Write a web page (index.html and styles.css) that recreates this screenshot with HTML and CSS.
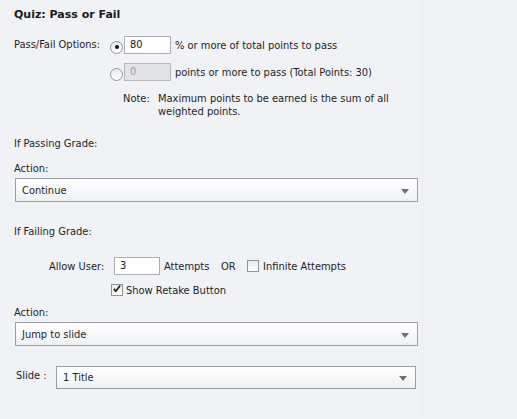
FILE: index.html
```html
<!DOCTYPE html>
<html>
<head>
<meta charset="utf-8">
<link rel="stylesheet" href="styles.css">
</head>
<body>
<div class="panel">
  <div class="title">Quiz: Pass or Fail</div>

  <div class="opt-row first">
    <span class="opt-label">Pass/Fail Options:</span>
    <span class="radio checked"></span>
    <span class="input">80</span>
    <span class="opt-text">% or more of total points to pass</span>
  </div>
  <div class="opt-row second">
    <span class="opt-label"></span>
    <span class="radio"></span>
    <span class="input disabled">0</span>
    <span class="opt-text">points or more to pass (Total Points: 30)</span>
  </div>
  <div class="note">
    <span class="note-label">Note:</span>
    <span class="note-text">Maximum points to be earned is the sum of all weighted points.</span>
  </div>

  <div class="label pass-head">If Passing Grade:</div>
  <div class="label action">Action:</div>
  <div class="select">
    <span>Continue</span>
    <span class="arrow"></span>
  </div>

  <div class="label fail-head">If Failing Grade:</div>
  <div class="allow-row">
    <span class="allow-label">Allow User:</span>
    <span class="input small">3</span>
    <span class="attempts">Attempts</span>
    <span class="or">OR</span>
    <span class="check"></span>
    <span>Infinite Attempts</span>
  </div>
  <div class="retake-row">
    <span class="check checked">
      <svg width="12" height="12" viewBox="0 0 12 12"><path d="M2.2 5.6 L4.6 8.6 L9.8 1.8" fill="none" stroke="#1a1a1a" stroke-width="2"/></svg>
    </span>
    <span>Show Retake Button</span>
  </div>
  <div class="label action2">Action:</div>
  <div class="select">
    <span>Jump to slide</span>
    <span class="arrow"></span>
  </div>

  <div class="slide-row">
    <span class="slide-label">Slide :</span>
    <div class="select slide-select">
      <span>1 Title</span>
      <span class="arrow"></span>
    </div>
  </div>
</div>
</body>
</html>
```
FILE: styles.css
```css
html, body {
  margin: 0;
  padding: 0;
  background: #eef0f4;
}
body {
  font-family: "DejaVu Sans Condensed", "DejaVu Sans", sans-serif;
  font-size: 11px;
  line-height: 13px;
  color: #1e1e1e;
}
.panel {
  width: 404px;
  padding: 8px 0 20px 14px;
  background: #f0f2f5;
  min-height: 390px;
}
.title {
  font-family: "DejaVu Sans", sans-serif;
  font-weight: bold;
  font-size: 11px;
  color: #1a1a1a;
}
.opt-row {
  display: flex;
  align-items: center;
  height: 18px;
}
.opt-row.first { margin-top: 15px; }
.opt-row.second { margin-top: 9px; }
.opt-label {
  width: 96px;
  flex: none;
  position: relative;
  top: -1px;
}
.radio {
  width: 11px;
  height: 11px;
  border: 1px solid #8f949c;
  border-radius: 50%;
  background: linear-gradient(#e6e8ec, #ffffff);
  flex: none;
  margin-right: 1px;
  position: relative;
  top: 2px;
  display: flex;
  align-items: center;
  justify-content: center;
}
.radio.checked::after {
  content: "";
  width: 4px;
  height: 4px;
  border-radius: 50%;
  background: #111;
}
.input {
  box-sizing: border-box;
  width: 47px;
  height: 18px;
  border: 1px solid #a9adb5;
  background: #ffffff;
  padding: 0 0 0 5px;
  line-height: 16px;
  flex: none;
  color: #1a1a1a;
}
.input.disabled {
  background: #e2e3e6;
  border-color: #b4b7bd;
  color: #9a9a9a;
}
.opt-text {
  margin-left: 4px;
}
.note {
  display: flex;
  margin-top: 11px;
  padding-left: 109px;
}
.note-label {
  width: 35px;
  flex: none;
}
.note-text {
  width: 240px;
}
.label.pass-head { margin-top: 19px; }
.label.action { margin-top: 12px; }
.label.fail-head { margin-top: 23px; }
.label.action2 { margin-top: 10px; }
.select {
  box-sizing: border-box;
  margin-top: 3px;
  margin-left: 1px;
  width: 403px;
  height: 24px;
  border: 1px solid #9a9ea8;
  background: linear-gradient(#ffffff, #f6f7f9 60%, #eff0f3);
  display: flex;
  align-items: center;
  justify-content: space-between;
  padding: 0 8px 0 6px;
}
.arrow {
  width: 0;
  height: 0;
  border-left: 4px solid transparent;
  border-right: 4px solid transparent;
  border-top: 5px solid #6e7078;
  margin-top: 2px;
}
.allow-row {
  display: flex;
  align-items: center;
  margin-top: 19px;
  height: 18px;
  padding-left: 35px;
}
.allow-label {
  width: 65px;
  flex: none;
}
.input.small {
  width: 46px;
}
.attempts {
  margin-left: 4px;
  width: 57px;
  flex: none;
}
.or {
  width: 26px;
  flex: none;
}
.check {
  box-sizing: border-box;
  width: 12px;
  height: 12px;
  border: 1px solid #8f949c;
  background: linear-gradient(#e8eaee, #ffffff);
  flex: none;
  margin-right: 4px;
  display: flex;
  align-items: center;
  justify-content: center;
}
.check svg {
  position: relative;
  top: -1px;
  left: 0;
}
.retake-row {
  display: flex;
  align-items: center;
  margin-top: 9px;
  height: 12px;
  padding-left: 97px;
}
.retake-row .check {
  margin-right: 3px;
}
.slide-row {
  display: flex;
  align-items: center;
  margin-top: 20px;
  padding-left: 2px;
}
.slide-label {
  width: 40px;
  flex: none;
  position: relative;
  top: -2px;
}
.select.slide-select {
  margin: 0;
  width: 360px;
  height: 23px;
  padding-left: 6px;
}
```
